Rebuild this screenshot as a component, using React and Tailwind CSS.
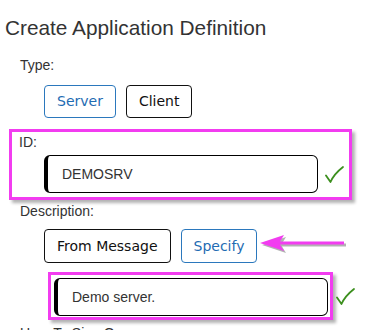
function Check() {
  return (
    <svg width="19" height="17" viewBox="0 0 19 17" className="shrink-0">
      <path d="M1 9.5 L5.5 16 Q9 8 18 1" fill="none" stroke="#3c8f1e" strokeWidth="1.8" strokeLinecap="round" strokeLinejoin="round" />
    </svg>
  );
}

function Btn({ children, active, tall }) {
  return (
    <button
      className={
        'rounded-[4px] border bg-white px-[12px] text-[14px] font-["DejaVu_Sans",sans-serif] ' +
        (tall ? 'h-[34px] ' : 'h-[33px] ') +
        (active ? 'border-[#2b78bd] text-[#1f6cb3]' : 'border-[#111] text-[#111]')
      }
    >
      {children}
    </button>
  );
}

function Field({ value }) {
  return (
    <div className="flex h-[38px] w-[274px] items-center rounded-[6px] border border-l-[4px] border-black pl-[14px] text-[14px] text-[#333]">
      {value}
    </div>
  );
}

export default function App() {
  return (
    <div className="relative h-[330px] w-[371px] overflow-hidden bg-white font-['Liberation_Sans',Arial,sans-serif] text-[#333]">
      <h1 className="ml-[5px] mt-[16px] text-[20.8px] leading-[24px] text-[#333]">Create Application Definition</h1>

      <div className="ml-[20px] mt-[16px] text-[14px] leading-[18px]">Type:</div>
      <div className="ml-[44px] mt-[11px] flex gap-[10px]">
        <Btn active>Server</Btn>
        <Btn>Client</Btn>
      </div>

      {/* highlighted ID row */}
      <div className="ml-[9px] mt-[11px] w-[343px] border-[3px] border-[#f23cf0] pb-[4px] pt-[1px] shadow-[3px_3px_3px_rgba(0,0,0,0.3)]">
        <div className="ml-[7px] text-[14px] leading-[18px]">ID:</div>
        <div className="ml-[32px] mt-[4px] flex items-center gap-[7px]">
          <Field value="DEMOSRV" />
          <Check />
        </div>
      </div>

      <div className="ml-[20px] mt-[2px] text-[14px] leading-[18px]">Description:</div>
      <div className="ml-[44px] mt-[9px] flex gap-[10px]">
        <Btn tall>From Message</Btn>
        <Btn tall active>Specify</Btn>
      </div>

      <div className="ml-[48px] mt-[9px] flex items-center gap-[3px]">
        <div className="border-[3px] border-[#f23cf0] pb-[1px] pl-[3px] pr-[2px] pt-[3px] shadow-[3px_3px_3px_rgba(0,0,0,0.3)]">
          <Field value="Demo server." />
        </div>
        <Check />
      </div>

      <div className="ml-[20px] mt-[4px] text-[14px] leading-[18px]">User To Sign On:</div>

      {/* annotation arrow */}
      <svg className="absolute left-[258px] top-[234px]" width="92" height="22" viewBox="0 0 92 22">
        <g transform="translate(2,2)" opacity="0.3">
          <path d="M2 9 L26 1 L22 7.5 L86 7.5 L86 10.5 L22 10.5 L26 17 Z" fill="#000" />
        </g>
        <path d="M2 9 L26 1 L22 7.5 L86 7.5 L86 10.5 L22 10.5 L26 17 Z" fill="#f23cf0" />
      </svg>
    </div>
  );
}
